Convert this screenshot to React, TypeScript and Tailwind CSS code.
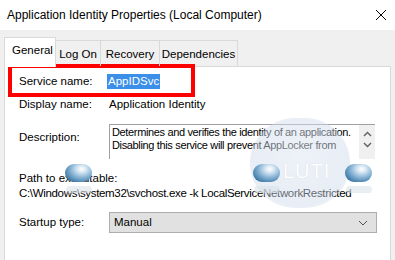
import React from "react";

const font = { fontFamily: '"Liberation Sans", Arial, sans-serif' };

const Bubble: React.FC<{ left: number; top: number }> = ({ left, top }) => (
  <span
    className="absolute w-[27px] h-[18px] rounded-full bg-[radial-gradient(ellipse_at_62%_28%,#ffffff_0%,#d8e8f4_18%,#7fadd0_50%,#3d77a5_80%,#24557f_100%)] pointer-events-none"
    style={{ left, top }}
  />
);

const App: React.FC = () => {
  return (
    <div className="relative w-[395px] h-[260px] overflow-hidden bg-[#f0f0f0] text-black text-[11.5px]" style={font}>
      {/* title bar */}
      <div className="h-[30px] bg-white flex items-center justify-between pl-[7px] pr-[7px]">
        <span className="text-[12px] whitespace-nowrap">Application Identity Properties (Local Computer)</span>
        <svg width="12" height="12" viewBox="0 0 12 12" className="mr-[1px]">
          <path d="M1 1L11 11M11 1L1 11" stroke="#000" strokeWidth="1" />
        </svg>
      </div>

      {/* tabs */}
      <div className="mt-[7px] pl-[4px] flex items-end h-[29px] relative z-10 whitespace-nowrap">
        <div className="h-[30px] w-[52px] -mb-px bg-white border border-b-0 border-[#d9d9d9] pl-[7px] pt-[4px]">General</div>
        <div className="h-[26px] w-[45px] border border-l-0 border-b-0 border-[#d9d9d9] flex items-center justify-center pt-[2px]">Log On</div>
        <div className="h-[26px] w-[59px] border border-l-0 border-b-0 border-[#d9d9d9] flex items-center justify-center pt-[2px]">Recovery</div>
        <div className="h-[26px] w-[78px] border border-l-0 border-b-0 border-[#d9d9d9] flex items-center justify-center pt-[2px]">Dependencies</div>
      </div>

      {/* panel */}
      <div className="mx-[4px] h-[200px] bg-white border border-[#d9d9d9] pl-[14px] pt-[7px] whitespace-nowrap">
        <div className="flex h-[15px] items-center">
          <span className="w-[90px]">Service name:</span>
          <span className="bg-[#3b8fe8] text-white px-[1px] h-[15px] leading-[15px] -ml-[2px]">AppIDSvc</span>
        </div>
        <div className="flex h-[15px] items-center mt-[8px]">
          <span className="w-[90px]">Display name:</span>
          <span>Application Identity</span>
        </div>
        <div className="flex mt-[12px]">
          <span className="w-[90px] pt-[5px]">Description:</span>
          <div className="w-[266px] h-[35px] border border-[#a0a0a0] border-r-0 border-b-0 flex">
            <div className="flex-1 pl-[2px] leading-[13px] pt-[1px] text-[11px] tracking-[-0.35px] overflow-hidden">
              <div>Determines and verifies the identity of an application.</div>
              <div>Disabling this service will prevent AppLocker from</div>
            </div>
            <div className="w-[16px] bg-[#f0f0f0] flex flex-col items-center pt-[6px] gap-[5px]">
              <svg width="9" height="6" viewBox="0 0 9 6"><path d="M1 5L4.5 1.5L8 5" stroke="#606060" strokeWidth="1.4" fill="none" /></svg>
              <svg width="9" height="6" viewBox="0 0 9 6"><path d="M1 1L4.5 4.5L8 1" stroke="#606060" strokeWidth="1.4" fill="none" /></svg>
            </div>
          </div>
        </div>
        <div className="h-[15px] flex items-center mt-[12px]">Path to executable:</div>
        <div className="h-[15px] flex items-center tracking-[-0.33px]">C:\Windows\system32\svchost.exe -k LocalServiceNetworkRestricted</div>
        <div className="flex items-center mt-[11px]">
          <span className="w-[90px]">Startup type:</span>
          <div className="w-[268px] h-[21px] bg-[#e1e1e1] border border-[#adadad] flex items-center justify-between pl-[4px] pr-[8px]">
            <span>Manual</span>
            <svg width="10" height="6" viewBox="0 0 10 6"><path d="M1 1L5 5L9 1" stroke="#505050" strokeWidth="1" fill="none" /></svg>
          </div>
        </div>
      </div>

      {/* highlight annotation */}
      <div className="absolute left-[8px] top-[64px] w-[187px] h-[33px] border-[4px] border-[#ff0000] pointer-events-none" />

      {/* watermark */}
      <div className="absolute left-[250px] top-[118px] w-[100px] h-[90px] rounded-full bg-[radial-gradient(circle_at_50%_40%,rgba(222,230,242,0.55)_0%,rgba(205,217,234,0.45)_70%,rgba(205,217,234,0)_100%)] pointer-events-none" />
      <span className="absolute left-[283px] top-[160px] leading-[22px] text-[20px] text-white [text-shadow:0_0_1px_#c8d2de] tracking-[1px] pointer-events-none">LUTI</span>
      <span className="absolute left-[66px] top-[186px] w-[26px] h-[7px] rounded-full bg-[#d8e2ea]/60 pointer-events-none" />
      <span className="absolute left-[254px] top-[186px] w-[26px] h-[7px] rounded-full bg-[#d8e2ea]/60 pointer-events-none" />
      <span className="absolute left-[346px] top-[186px] w-[26px] h-[7px] rounded-full bg-[#d8e2ea]/60 pointer-events-none" />
      <Bubble left={65} top={164} />
      <Bubble left={253} top={164} />
      <Bubble left={345} top={164} />
    </div>
  );
};

export default App;
